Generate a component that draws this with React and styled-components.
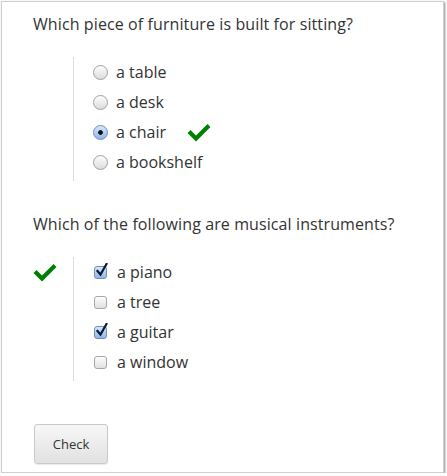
import React from "react";
import styled, { createGlobalStyle } from "styled-components";

const Global = createGlobalStyle`
  html, body { margin: 0; padding: 0; background: #fff; }
  body { font-family: "Open Sans", "Noto Sans", sans-serif; color: #333; }
`;

const Frame = styled.div`
  box-sizing: border-box;
  margin: 1px 0 0 1px;
  width: 443px;
  height: 472px;
  border: 1px solid #cfcfcf;
  box-shadow: 1px 1px 2px rgba(0, 0, 0, 0.45);
  background: #fff;
  padding: 11px 0 0 31px;
`;

const Question = styled.div`
  font-size: 16px;
  line-height: 22px;
  letter-spacing: 0.1px;
  color: #333;
  margin: 0 0 ${(p) => p.$gap}px 0;
`;

const Block = styled.div`
  display: flex;
  align-items: flex-start;
  margin-bottom: ${(p) => p.$after}px;
`;

const Status = styled.div`
  width: 40px;
  height: 30px;
  display: flex;
  align-items: center;
`;

const Options = styled.div`
  border-left: 1px solid #dcdcdc;
  padding: 0 0 4px 19px;
  display: flex;
  flex-direction: column;
`;

const Row = styled.label`
  display: flex;
  align-items: center;
  height: 30px;
  font-size: 16px;
  color: #333;
`;

const Radio = styled.span`
  box-sizing: border-box;
  width: 15px;
  height: 15px;
  border-radius: 50%;
  border: 1px solid ${(p) => (p.$on ? "#6f8fb8" : "#a0a0a0")};
  background: ${(p) =>
    p.$on
      ? "radial-gradient(circle at 50% 50%, #111 0 2px, transparent 2.6px), linear-gradient(#d6e6fb, #8fb6ea)"
      : "linear-gradient(#fdfdfd, #dcdcdc)"};
  margin-right: 8px;
  flex: none;
`;

const Box = styled.span`
  position: relative;
  box-sizing: border-box;
  width: 13px;
  height: 13px;
  border-radius: 3px;
  border: 1px solid ${(p) => (p.$on ? "#6f8fb8" : "#a6a6a6")};
  background: ${(p) =>
    p.$on ? "linear-gradient(#d6e6fb, #8fb6ea)" : "linear-gradient(#fdfdfd, #e0e0e0)"};
  margin: 0 10px 0 1px;
  flex: none;
`;

const Tick = styled.svg`
  position: absolute;
  left: 1px;
  top: -4px;
  width: 12px;
  height: 14px;
`;

const Mark = styled.svg`
  width: 24px;
  height: 19px;
  margin-left: ${(p) => p.$ml || 0}px;
  flex: none;
`;

const Button = styled.button`
  box-sizing: border-box;
  width: 74px;
  height: 40px;
  border: 1px solid #cacaca;
  border-radius: 3px;
  background: linear-gradient(#f7f7f7, #e1e1e1);
  font-family: "Open Sans", "Noto Sans", sans-serif;
  font-size: 13px;
  color: #333;
  padding: 0;
  margin-left: 1px;
  box-shadow: 0 1px 1px rgba(0,0,0,0.08);
`;

function Check({ ml }) {
  return (
    <Mark $ml={ml} viewBox="0 0 24 19">
      <path d="M0.5 10 L3.5 7 L9 12.5 L20.5 1 L23.5 4 L9 18.5 Z" fill="#008000" />
    </Mark>
  );
}

function CheckBox({ on }) {
  return (
    <Box $on={on}>
      {on && (
        <Tick viewBox="0 0 12 14">
          <path d="M1.5 8 L4.5 11.5 L10.5 1" stroke="#0c1a33" strokeWidth="2.2" fill="none" strokeLinecap="square" />
        </Tick>
      )}
    </Box>
  );
}

export default function App() {
  const q1 = ["a table", "a desk", "a chair", "a bookshelf"];
  const q2 = [
    ["a piano", true],
    ["a tree", false],
    ["a guitar", true],
    ["a window", false],
  ];
  return (
    <>
      <Global />
      <Frame>
        <Question $gap={22}>Which piece of furniture is built for sitting?</Question>
        <Block $after={32}>
          <Status />
          <Options>
            {q1.map((t) => (
              <Row key={t}>
                <Radio $on={t === "a chair"} />
                {t}
                {t === "a chair" && <Check ml={21} />}
              </Row>
            ))}
          </Options>
        </Block>
        <Question $gap={22}>Which of the following are musical instruments?</Question>
        <Block $after={43}>
          <Status>
            <Check />
          </Status>
          <Options>
            {q2.map(([t, on]) => (
              <Row key={t}>
                <CheckBox on={on} />
                {t}
              </Row>
            ))}
          </Options>
        </Block>
        <Button>Check</Button>
      </Frame>
    </>
  );
}
